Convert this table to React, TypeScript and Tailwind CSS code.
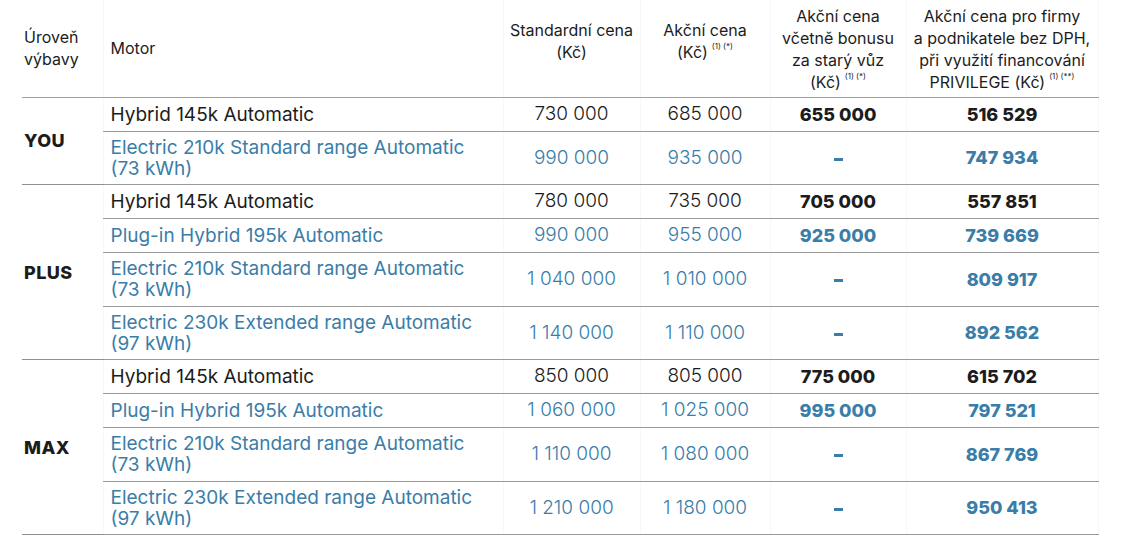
import React from 'react';

type Row = {
  motor: string[];
  blue: boolean;
  std: string;
  action: string;
  bonus: string | null;
  firm: string;
};

type Group = { level: string; rows: Row[] };

const groups: Group[] = [
  {
    level: 'YOU',
    rows: [
      { motor: ['Hybrid 145k Automatic'], blue: false, std: '730 000', action: '685 000', bonus: '655 000', firm: '516 529' },
      { motor: ['Electric 210k Standard range Automatic', '(73 kWh)'], blue: true, std: '990 000', action: '935 000', bonus: null, firm: '747 934' },
    ],
  },
  {
    level: 'PLUS',
    rows: [
      { motor: ['Hybrid 145k Automatic'], blue: false, std: '780 000', action: '735 000', bonus: '705 000', firm: '557 851' },
      { motor: ['Plug-in Hybrid 195k Automatic'], blue: true, std: '990 000', action: '955 000', bonus: '925 000', firm: '739 669' },
      { motor: ['Electric 210k Standard range Automatic', '(73 kWh)'], blue: true, std: '1 040 000', action: '1 010 000', bonus: null, firm: '809 917' },
      { motor: ['Electric 230k Extended range Automatic', '(97 kWh)'], blue: true, std: '1 140 000', action: '1 110 000', bonus: null, firm: '892 562' },
    ],
  },
  {
    level: 'MAX',
    rows: [
      { motor: ['Hybrid 145k Automatic'], blue: false, std: '850 000', action: '805 000', bonus: '775 000', firm: '615 702' },
      { motor: ['Plug-in Hybrid 195k Automatic'], blue: true, std: '1 060 000', action: '1 025 000', bonus: '995 000', firm: '797 521' },
      { motor: ['Electric 210k Standard range Automatic', '(73 kWh)'], blue: true, std: '1 110 000', action: '1 080 000', bonus: null, firm: '867 769' },
      { motor: ['Electric 230k Extended range Automatic', '(97 kWh)'], blue: true, std: '1 210 000', action: '1 180 000', bonus: null, firm: '950 413' },
    ],
  },
];

const Sup = ({ children }: { children: React.ReactNode }) => (
  <sup className="text-[8px] align-[5px] ml-1">{children}</sup>
);

export default function App() {
  return (
    <div className="bg-white w-[1121px] h-[549px] pl-[22px] text-[#1c1c1c]" style={{ fontFamily: 'Inter, "Noto Sans", sans-serif' }}>
      <table className="border-collapse w-[1076px] table-fixed">
        <colgroup>
          <col className="w-[81px]" />
          <col className="w-[400px]" />
          <col className="w-[137px]" />
          <col className="w-[130px]" />
          <col className="w-[136px]" />
          <col className="w-[192px]" />
        </colgroup>
        <thead>
          <tr className="h-[97px] text-[16px] leading-[22px]">
            <th className="text-left font-normal align-middle border-b border-[#a0a0a0] pl-[2px]">Úroveň<br />výbavy</th>
            <th className="text-left font-normal align-middle pl-[7px] border-b border-[#a0a0a0] border-l border-l-[#f8f8f8]">Motor</th>
            <th className="font-normal align-middle border-b border-[#a0a0a0] border-x border-x-[#f8f8f8] pb-[15px]">Standardní cena<br />(Kč)</th>
            <th className="font-normal align-middle border-b border-[#a0a0a0] border-x border-x-[#f8f8f8] pb-[15px]">Akční cena<br />(Kč)<Sup>(1) (*)</Sup></th>
            <th className="font-normal align-middle border-b border-[#a0a0a0] border-x border-x-[#f8f8f8] pt-[2px]">Akční cena<br />včetně bonusu<br />za starý vůz<br />(Kč)<Sup>(1) (*)</Sup></th>
            <th className="font-normal align-middle border-b border-[#a0a0a0] border-x border-x-[#f8f8f8] pt-[2px]">Akční cena pro firmy<br />a podnikatele bez DPH,<br />při využití financování<br />PRIVILEGE (Kč)<Sup>(1) (**)</Sup></th>
          </tr>
        </thead>
        <tbody>
          {groups.map((g) =>
            g.rows.map((r, i) => {
              const color = r.blue ? 'text-[#3a7da8]' : 'text-[#1c1c1c]';
              const double = r.motor.length > 1;
              return (
                <tr key={g.level + i} className={double ? 'h-[53.5px]' : 'h-[34px]'}>
                  {i === 0 && (
                    <td rowSpan={g.rows.length} className="align-middle pl-[2px] text-[18px] font-extrabold border-b border-[#8f8f8f] tracking-wide">
                      {g.level}
                    </td>
                  )}
                  <td className={`pl-[7px] text-[19px] leading-[21px] border-b border-[#9a9a9a] border-l border-l-[#f8f8f8] ${color}`}>
                    {r.motor.map((m, k) => (
                      <div key={k}>{m}</div>
                    ))}
                  </td>
                  <td className={`text-center text-[19px] font-light border-b border-[#9a9a9a] border-x border-x-[#f8f8f8] ${color}`}>{r.std}</td>
                  <td className={`text-center text-[19px] font-light border-b border-[#9a9a9a] border-x border-x-[#f8f8f8] ${color}`}>{r.action}</td>
                  <td className={`text-center text-[18px] font-extrabold border-b border-[#9a9a9a] border-x border-x-[#f8f8f8] ${color}`}>
                    {r.bonus ?? <span className="inline-block w-[9px] h-[3px] bg-[#3a7da8] align-middle" />}
                  </td>
                  <td className={`text-center text-[18px] font-extrabold border-b border-[#9a9a9a] border-x border-x-[#f8f8f8] ${color}`}>{r.firm}</td>
                </tr>
              );
            })
          )}
        </tbody>
      </table>
    </div>
  );
}
